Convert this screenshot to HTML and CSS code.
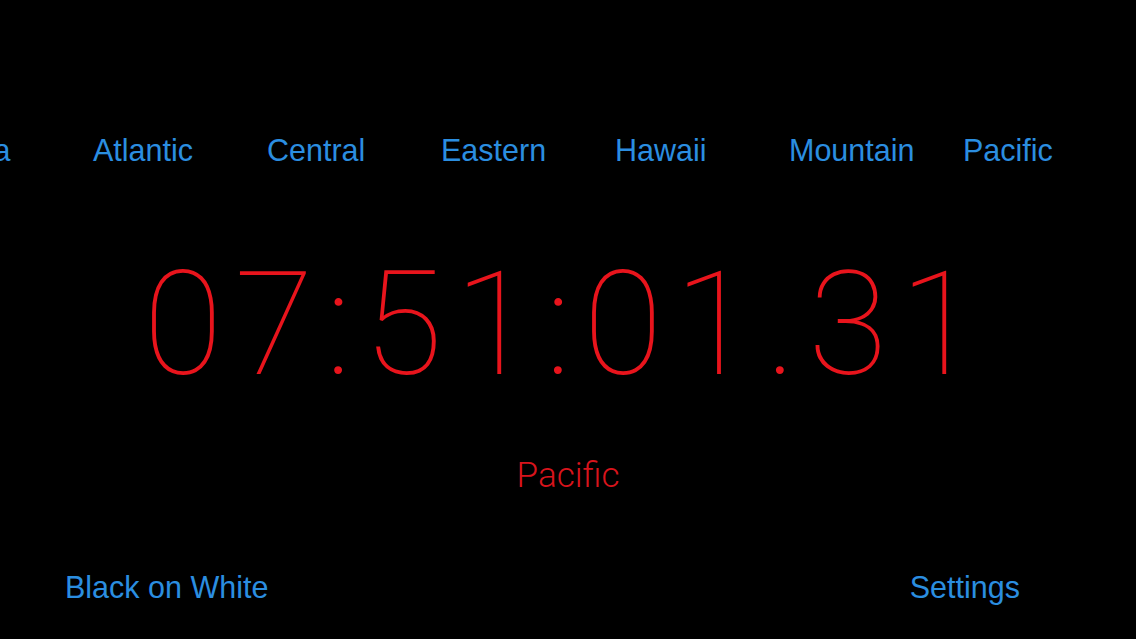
FILE: index.html
```html
<!DOCTYPE html>
<html lang="en">
<head>
<meta charset="utf-8">
<title>World Clock</title>
<link rel="stylesheet" href="styles.css">
</head>
<body>
<main class="screen">
  <nav class="zones">
    <div class="zone-track">
      <span class="zone">Alaska</span>
      <span class="zone">Atlantic</span>
      <span class="zone">Central</span>
      <span class="zone">Eastern</span>
      <span class="zone">Hawaii</span>
      <span class="zone">Mountain</span>
      <span class="zone">Pacific</span>
    </div>
  </nav>
  <div class="clock">07:51:01.31</div>
  <div class="zone-name">Pacific</div>
  <footer class="actions">
    <span class="action">Black on White</span>
    <span class="action">Settings</span>
  </footer>
</main>
</body>
</html>
```
FILE: styles.css
```css
html, body {
  margin: 0;
  padding: 0;
  background: #000;
}
.screen {
  width: 1136px;
  height: 639px;
  overflow: hidden;
  display: flex;
  flex-direction: column;
  font-family: "Liberation Sans", Arial, sans-serif;
}
.zones {
  margin-top: 132px;
  height: 36px;
  overflow: hidden;
}
.zone-track {
  display: flex;
  margin-left: -81px;
}
.zone {
  flex: 0 0 174px;
  font-size: 30.5px;
  line-height: 36px;
  color: #2b8ee0;
  white-space: nowrap;
}
.clock {
  margin-top: 76px;
  height: 160px;
  padding-right: 2px;
  font-family: Roboto, "Liberation Sans", sans-serif;
  font-weight: 100;
  font-size: 145px;
  line-height: 160px;
  letter-spacing: 11.8px;
  color: #e8141c;
  text-align: center;
  white-space: nowrap;
}
.zone-name {
  margin-top: 52px;
  height: 40px;
  font-family: Roboto, "Liberation Sans", sans-serif;
  font-weight: 300;
  font-size: 35px;
  line-height: 40px;
  color: #d8141c;
  text-align: center;
}
.actions {
  margin-top: 73px;
  display: flex;
  justify-content: space-between;
  padding: 0 116px 0 65px;
}
.action {
  font-size: 30.5px;
  line-height: 36px;
  color: #2b8ee0;
}
```
